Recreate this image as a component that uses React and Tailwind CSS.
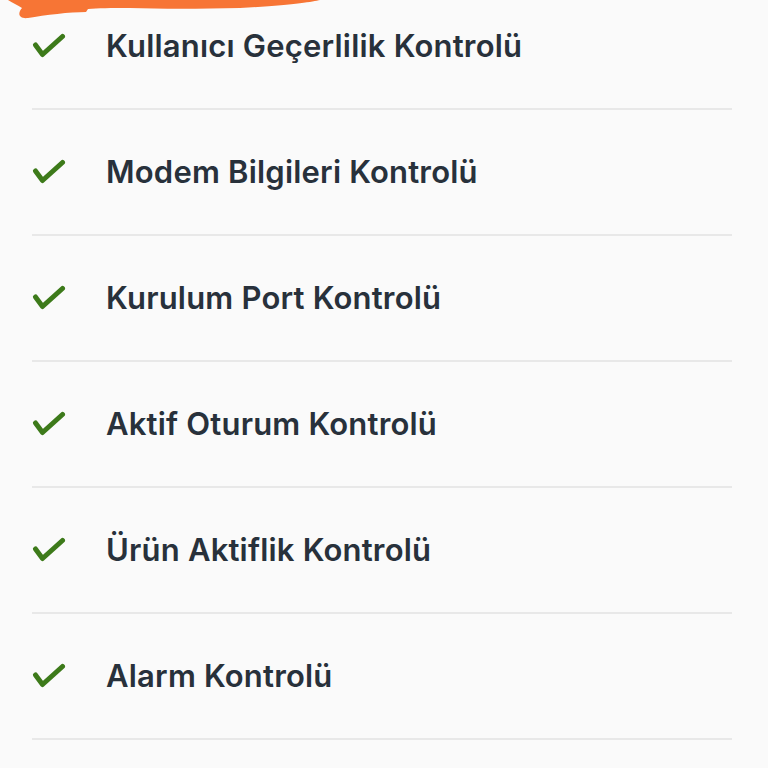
import React from 'react';

const checks = [
  'Kullanıcı Geçerlilik Kontrolü',
  'Modem Bilgileri Kontrolü',
  'Kurulum Port Kontrolü',
  'Aktif Oturum Kontrolü',
  'Ürün Aktiflik Kontrolü',
  'Alarm Kontrolü',
];

function CheckIcon() {
  return (
    <svg width="34" height="26" viewBox="0 0 34 26" fill="none">
      <path d="M3.5 12 L10.5 21.5 L30.5 3.5" stroke="#3d7a1a" strokeWidth="5" strokeLinecap="round" strokeLinejoin="round" />
    </svg>
  );
}

export default function App() {
  return (
    <div className="relative w-[768px] h-[768px] overflow-hidden bg-[#fafafa]" style={{ fontFamily: 'Inter, "Noto Sans", sans-serif' }}>
      <svg className="absolute left-0 top-0" width="340" height="24" viewBox="0 0 340 24">
        <path
          d="M8 0 L320 0 C312 2 292 5 240 8 C200 9 160 9 130 8 C110 8 98 8 88 9 L86 12 C70 12 45 15 28 18 C19 19 17 14 22 8 C18 5 12 3 8 0 Z"
          fill="#f77535"
        />
      </svg>
      <div className="mt-[-16px] pl-8 pr-9">
        {checks.map(label => (
          <div key={label} className="h-[126px] flex items-center border-b-2 border-[#e8e8e8]">
            <div className="w-[74px] flex items-center">
              <CheckIcon />
            </div>
            <span className="text-[31px] font-semibold text-[#28313b] tracking-[0.2px]">{label}</span>
          </div>
        ))}
      </div>
    </div>
  );
}
